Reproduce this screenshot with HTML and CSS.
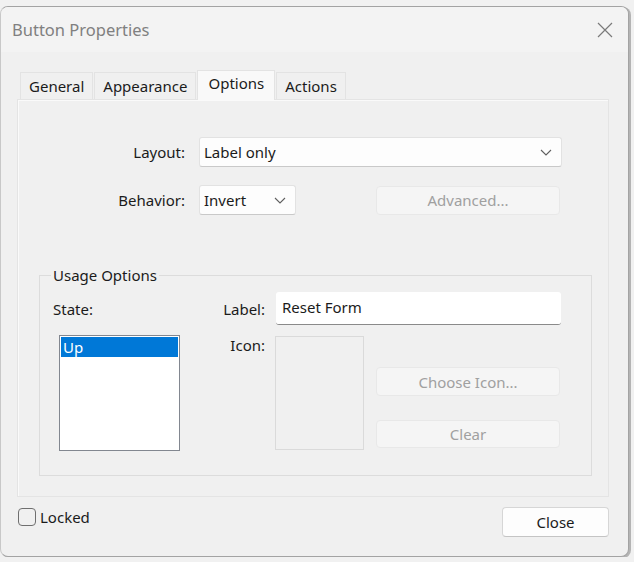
FILE: index.html
```html
<!DOCTYPE html>
<html>
<head>
    <title>Button Properties</title>
    <link rel="stylesheet" href="styles.css">
</head>
<body>
    <div class="window">
        <div class="titlebar">
            <span class="title">Button Properties</span>
            <svg class="close-x" width="16" height="16" viewBox="0 0 16 16">
                <path d="M1 1 L15 15 M15 1 L1 15" stroke="#7a7a7a" stroke-width="1.2" fill="none"/>
            </svg>
        </div>

        <div class="content">
            <div class="tabs">
                <div class="tab">General</div>
                <div class="tab">Appearance</div>
                <div class="tab active">Options</div>
                <div class="tab">Actions</div>
            </div>

            <div class="panel">
                <div class="form-row">
                    <label class="row-label">Layout:</label>
                    <div class="combo combo-wide">
                        <span>Label only</span>
                        <svg class="chevron" width="12" height="7" viewBox="0 0 12 7"><path d="M1 1 L6 6 L11 1" stroke="#606060" stroke-width="1.1" fill="none"/></svg>
                    </div>
                </div>
                <div class="form-row row-behavior">
                    <label class="row-label">Behavior:</label>
                    <div class="combo combo-small">
                        <span>Invert</span>
                        <svg class="chevron" width="12" height="7" viewBox="0 0 12 7"><path d="M1 1 L6 6 L11 1" stroke="#606060" stroke-width="1.1" fill="none"/></svg>
                    </div>
                    <button class="btn-disabled btn-advanced" disabled>Advanced...</button>
                </div>

                <fieldset class="group">
                    <legend>Usage Options</legend>
                    <div class="group-row">
                        <span class="state-label">State:</span>
                        <label class="field-label">Label:</label>
                        <div class="text-input">Reset Form</div>
                    </div>
                    <div class="group-row row-icon">
                        <div class="listbox">
                            <div class="list-item selected">Up</div>
                        </div>
                        <label class="field-label icon-label">Icon:</label>
                        <div class="icon-box"></div>
                        <div class="icon-buttons">
                            <button class="btn-disabled btn-choose" disabled>Choose Icon...</button>
                            <button class="btn-disabled btn-clear" disabled>Clear</button>
                        </div>
                    </div>
                </fieldset>
            </div>

            <div class="footer">
                <label class="check">
                    <span class="check-box"></span>
                    <span>Locked</span>
                </label>
                <button class="btn-close">Close</button>
            </div>
        </div>
    </div>
</body>
</html>
```

FILE: styles.css
```css
body {
    margin: 0;
    background: #f1f1f1;
    font-family: "Noto Sans", "Open Sans", sans-serif;
    font-size: 15px;
    color: #1b1b1b;
}
.window {
    margin-top: 6px;
    width: 629px;
    height: 551px;
    box-sizing: border-box;
    background: #f0f0f0;
    border: 1px solid #a3a3a3;
    border-left-color: #c8c8c8;
    border-radius: 8px;
    box-shadow: 2px 1px 0 #b4b4b4;
    overflow: hidden;
}
.titlebar {
    height: 45px;
    background: #f3f3f3;
    display: flex;
    align-items: center;
    justify-content: space-between;
    padding: 0 15px 0 11px;
}
.title {
    color: #808080;
    font-size: 16.5px;
}
.close-x {
    margin-top: 1px;
}
.content {
    padding: 18px 19px 0 16px;
}
.tabs {
    display: flex;
    align-items: flex-end;
    height: 29px;
    padding-left: 3px;
    position: relative;
    z-index: 1;
}
.tab {
    height: 27px;
    box-sizing: border-box;
    border: 1px solid #e3e3e3;
    border-bottom: none;
    background: #f0f0f0;
    padding: 0 8px;
    line-height: 27px;
    margin-right: 1px;
}
.tab.active {
    height: 30px;
    background: #f9f9f9;
    line-height: 25px;
    margin-bottom: -1px;
    padding: 0 10px;
}
.panel {
    height: 398px;
    box-sizing: border-box;
    border: 1px solid #e4e4e4;
    box-shadow: inset 1px 1px 0 #fafafa;
    background: #f0f0f0;
    padding-top: 37px;
}
.form-row {
    display: flex;
    align-items: center;
    height: 30px;
}
.row-behavior {
    margin-top: 18px;
}
.row-label {
    width: 167px;
    text-align: right;
    margin-right: 14px;
}
.combo {
    height: 30px;
    box-sizing: border-box;
    background: #fdfdfd;
    border: 1px solid #e2e2e2;
    border-bottom-color: #c9c9c9;
    border-radius: 3px;
    display: flex;
    align-items: center;
    justify-content: space-between;
    padding: 0 9px 0 4px;
}
.combo-wide {
    width: 363px;
}
.combo-small {
    width: 97px;
}
.btn-disabled {
    font: inherit;
    box-sizing: border-box;
    background: #f5f5f5;
    border: 1px solid #e8e8e8;
    border-radius: 4px;
    color: #a0a0a0;
    width: 184px;
    padding: 0;
}
.btn-advanced {
    height: 29px;
    margin-left: 80px;
}
.group {
    margin: 50px 16px 0 21px;
    padding: 0 0 24px 0;
    border: 1px solid #dcdcdc;
    min-width: 0;
}
.group legend {
    margin-left: 11px;
    padding: 0 2px;
    line-height: 20px;
}
.group-row {
    display: flex;
    align-items: center;
}
.group-row:first-of-type {
    margin-top: 7px;
}
.state-label {
    width: 160px;
    padding-left: 13px;
}
.field-label {
    width: 52px;
    text-align: right;
    margin-right: 11px;
}
.text-input {
    width: 285px;
    height: 33px;
    box-sizing: border-box;
    background: #ffffff;
    border-radius: 3px;
    border-bottom: 1px solid #8a8a8a;
    padding: 2px 6px 0;
    line-height: 26px;
}
.row-icon {
    align-items: flex-start;
    margin-top: 10px;
}
.listbox {
    width: 121px;
    height: 116px;
    box-sizing: border-box;
    margin-left: 19px;
    background: #ffffff;
    border: 1px solid #828790;
    padding: 1px;
}
.list-item {
    height: 20px;
    line-height: 20px;
    padding-left: 2px;
}
.list-item.selected {
    background: #0078d7;
    color: #ffffff;
}
.icon-label {
    width: 85px;
    margin-right: 10px;
    line-height: 20px;
}
.icon-box {
    width: 89px;
    height: 114px;
    box-sizing: border-box;
    margin-top: 1px;
    border: 1px solid #dadada;
}
.icon-buttons {
    display: flex;
    flex-direction: column;
    margin-left: 12px;
}
.btn-choose {
    height: 29px;
    margin-top: 32px;
}
.btn-clear {
    height: 28px;
    margin-top: 24px;
}
.footer {
    display: flex;
    justify-content: space-between;
    align-items: flex-start;
    margin-top: 10px;
}
.check {
    display: flex;
    align-items: center;
    height: 20px;
    margin-left: 1px;
}
.check-box {
    width: 18px;
    height: 18px;
    box-sizing: border-box;
    border: 1.5px solid #6f6f6f;
    border-radius: 4px;
    margin-right: 4px;
}
.btn-close {
    font: inherit;
    color: #1b1b1b;
    width: 107px;
    height: 30px;
    background: #fdfdfd;
    border: 1px solid #d6d6d6;
    border-bottom-color: #c4c4c4;
    border-radius: 4px;
    padding: 0;
}
```
